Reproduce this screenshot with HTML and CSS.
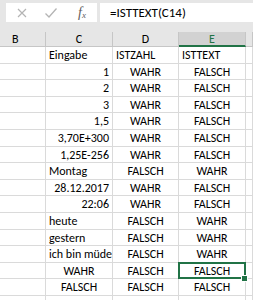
FILE: index.html
```html
<!DOCTYPE html>
<html lang="de">
<head>
    <meta charset="UTF-8">
    <title>ISTTEXT</title>
    <link rel="stylesheet" href="styles.css">
</head>
<body>

<div class="toolbar">
    <div class="tool-box">
        <svg class="tool-icon" width="12" height="12" viewBox="0 0 12 12">
            <path d="M2 2 L10 10 M10 2 L2 10" stroke="#b4b4b4" stroke-width="1.2" fill="none"/>
        </svg>
        <svg class="tool-icon" width="14" height="12" viewBox="0 0 14 12">
            <path d="M1.5 6.5 L5 10 L12.5 1.5" stroke="#b4b4b4" stroke-width="1.3" fill="none"/>
        </svg>
        <span class="fx">f<sub>x</sub></span>
    </div>
    <div class="formula">=ISTTEXT(C14)</div>
</div>

<div class="sheet">
    <div class="head">B</div>
    <div class="head">C</div>
    <div class="head">D</div>
    <div class="head active">E</div>
    <div class="head"></div>

    <div class="cell"></div><div class="cell">Eingabe</div><div class="cell">ISTZAHL</div><div class="cell">ISTTEXT</div><div class="cell"></div>
    <div class="cell"></div><div class="cell num">1</div><div class="cell mid">WAHR</div><div class="cell mid">FALSCH</div><div class="cell"></div>
    <div class="cell"></div><div class="cell num">2</div><div class="cell mid">WAHR</div><div class="cell mid">FALSCH</div><div class="cell"></div>
    <div class="cell"></div><div class="cell num">3</div><div class="cell mid">WAHR</div><div class="cell mid">FALSCH</div><div class="cell"></div>
    <div class="cell"></div><div class="cell num">1,5</div><div class="cell mid">WAHR</div><div class="cell mid">FALSCH</div><div class="cell"></div>
    <div class="cell"></div><div class="cell num">3,70E+300</div><div class="cell mid">WAHR</div><div class="cell mid">FALSCH</div><div class="cell"></div>
    <div class="cell"></div><div class="cell num">1,25E-256</div><div class="cell mid">WAHR</div><div class="cell mid">FALSCH</div><div class="cell"></div>
    <div class="cell"></div><div class="cell">Montag</div><div class="cell mid">FALSCH</div><div class="cell mid">WAHR</div><div class="cell"></div>
    <div class="cell"></div><div class="cell num">28.12.2017</div><div class="cell mid">WAHR</div><div class="cell mid">FALSCH</div><div class="cell"></div>
    <div class="cell"></div><div class="cell num">22:06</div><div class="cell mid">WAHR</div><div class="cell mid">FALSCH</div><div class="cell"></div>
    <div class="cell"></div><div class="cell">heute</div><div class="cell mid">FALSCH</div><div class="cell mid">WAHR</div><div class="cell"></div>
    <div class="cell"></div><div class="cell">gestern</div><div class="cell mid">FALSCH</div><div class="cell mid">WAHR</div><div class="cell"></div>
    <div class="cell"></div><div class="cell">ich bin müde</div><div class="cell mid">FALSCH</div><div class="cell mid">WAHR</div><div class="cell"></div>
    <div class="cell"></div><div class="cell mid">WAHR</div><div class="cell mid">FALSCH</div><div class="cell mid selected">FALSCH</div><div class="cell"></div>
    <div class="cell"></div><div class="cell mid">FALSCH</div><div class="cell mid">FALSCH</div><div class="cell mid">FALSCH</div><div class="cell"></div>
    <div class="cell"></div><div class="cell"></div><div class="cell"></div><div class="cell"></div><div class="cell"></div>
</div>

</body>
</html>
```

FILE: styles.css
```css
body {
    margin: 0;
    width: 253px;
    height: 300px;
    overflow: hidden;
    background-color: #fff;
    font-family: Carlito, Calibri, "Liberation Sans Narrow", "Liberation Sans", sans-serif;
    color: #000;
}
.toolbar {
    display: flex;
    gap: 3px;
    padding: 3px 0 10px 6px;
    background-color: #e6e6e6;
}
.tool-box {
    width: 91px;
    height: 19px;
    background-color: #fff;
    display: flex;
    align-items: center;
    gap: 16px;
    padding-left: 10px;
    box-sizing: border-box;
}
.tool-icon {
    display: block;
}
.fx {
    font-family: "Liberation Serif", serif;
    font-style: italic;
    font-size: 14px;
    color: #606060;
    margin-left: 4px;
}
.fx sub {
    font-size: 9px;
    vertical-align: -1px;
}
.formula {
    flex: 1;
    height: 19px;
    background-color: #fff;
    font-size: 13px;
    line-height: 19px;
    padding-left: 10px;
}
.sheet {
    display: grid;
    grid-template-columns: 46px 67px 66px 67px 7px;
    grid-template-rows: 15px repeat(16, 16.6px);
    font-size: 12px;
}
.head {
    background-color: #e6e6e6;
    border-right: 1px solid #c6c6c6;
    border-bottom: 1px solid #c6c6c6;
    text-align: center;
    line-height: 14px;
    font-size: 12px;
}
.head:first-child {
    text-align: left;
    padding-left: 12px;
}
.head.active {
    background-color: #d2d2d2;
    color: #217346;
    border-bottom: 2px solid #217346;
}
.cell {
    position: relative;
    border-right: 1px solid #dadada;
    border-bottom: 1px solid #dadada;
    padding: 0 3px;
    line-height: 16px;
    white-space: nowrap;
    overflow: hidden;
}
.num {
    text-align: right;
}
.mid {
    text-align: center;
}
.selected {
    overflow: visible;
}
.selected::after {
    content: "";
    position: absolute;
    left: -1px;
    top: -1px;
    right: -1px;
    bottom: -1px;
    border: 2px solid #217346;
}
.selected::before {
    content: "";
    position: absolute;
    right: -3px;
    bottom: -4px;
    width: 5px;
    height: 5px;
    background-color: #217346;
    border: 1px solid #fff;
    z-index: 1;
}
```
